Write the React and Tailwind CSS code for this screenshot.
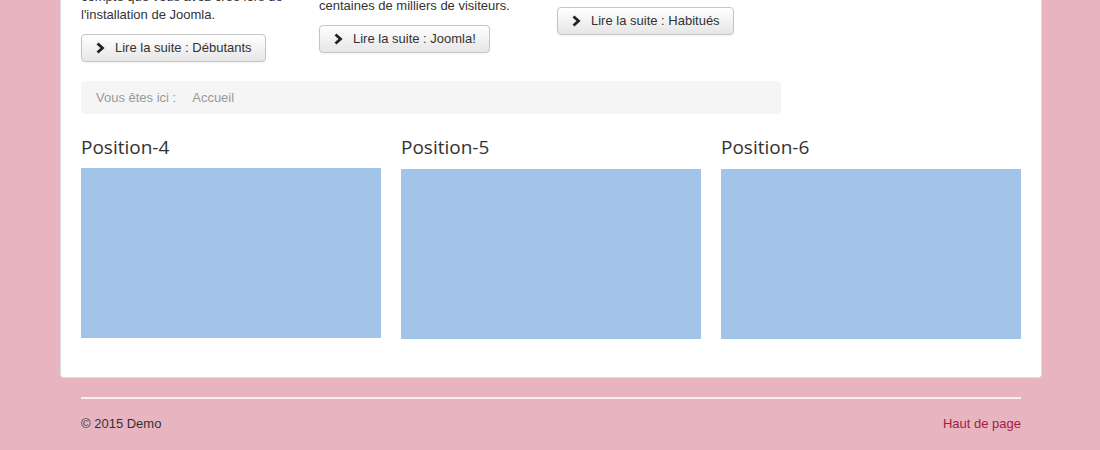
import React from 'react';

const Chevron = () => (
  <svg width="10" height="12" viewBox="0 0 10 12" className="shrink-0">
    <path d="M2.5 1.5 L7.5 6 L2.5 10.5" fill="none" stroke="#222" strokeWidth="2.8" strokeLinejoin="miter" />
  </svg>
);

const ReadMore = ({ label }) => (
  <button className="flex items-center gap-[10px] h-[28px] pl-[13px] pr-[13px] border border-[#c4c4c4] rounded-[4px] bg-gradient-to-b from-white to-[#e6e6e6] text-[13px] text-[#333] shadow-[0_1px_2px_rgba(0,0,0,0.05)]">
    <Chevron />
    <span>{label}</span>
  </button>
);

const Module = ({ title, gap }) => (
  <div>
    <h3 className={`text-[19px] leading-[24px] text-[#333] font-['Open_Sans',sans-serif] ${gap}`}>{title}</h3>
    <div className="h-[170px] bg-[#a1c4e8]" />
  </div>
);

const App = () => {
  return (
    <div className="min-h-screen bg-[#e8b4c0] font-['Liberation_Sans',Arial,sans-serif] text-[13px] leading-[18px] text-[#333] overflow-hidden">
      <div className="w-[982px] ml-[60px] bg-white rounded-b-[4px] border border-t-0 border-[#ddd] px-[20px] pb-[38px]">
        {/* ARTICLES (top cut off) */}
        <div className="flex items-start w-[700px]">
          <div className="w-[238px] mt-[-12px]">
            <p>compte que vous avez créé lors de</p>
            <p className="mb-[10px]">l'installation de Joomla.</p>
            <ReadMore label="Lire la suite : Débutants" />
          </div>
          <div className="w-[238px] mt-[-3px]">
            <p className="mb-[10px]">centaines de milliers de visiteurs.</p>
            <ReadMore label="Lire la suite : Joomla!" />
          </div>
          <div className="w-[224px] mt-[-21px]">
            <p className="mb-[10px]">de votre site.</p>
            <ReadMore label="Lire la suite : Habitués" />
          </div>
        </div>

        {/* BREADCRUMB */}
        <div className="w-[700px] mt-[19px] h-[33px] flex items-center px-[15px] bg-[#f5f5f5] rounded-[4px] text-[#999]">
          <span className="mr-[16px]">Vous êtes ici :</span>
          <span>Accueil</span>
        </div>

        {/* POSITIONS */}
        <div className="grid grid-cols-3 gap-[20px] mt-[21px]">
          <Module title="Position-4" gap="mb-[9px]" />
          <Module title="Position-5" gap="mb-[10px]" />
          <Module title="Position-6" gap="mb-[10px]" />
        </div>
      </div>

      {/* FOOTER */}
      <footer className="w-[940px] ml-[81px] mt-[19px]">
        <div className="h-[2px] bg-[#f7eef0]" />
        <div className="flex justify-between mt-[16px]">
          <span>© 2015 Demo</span>
          <a className="text-[#a11d44]">Haut de page</a>
        </div>
      </footer>
    </div>
  );
};

export default App;
